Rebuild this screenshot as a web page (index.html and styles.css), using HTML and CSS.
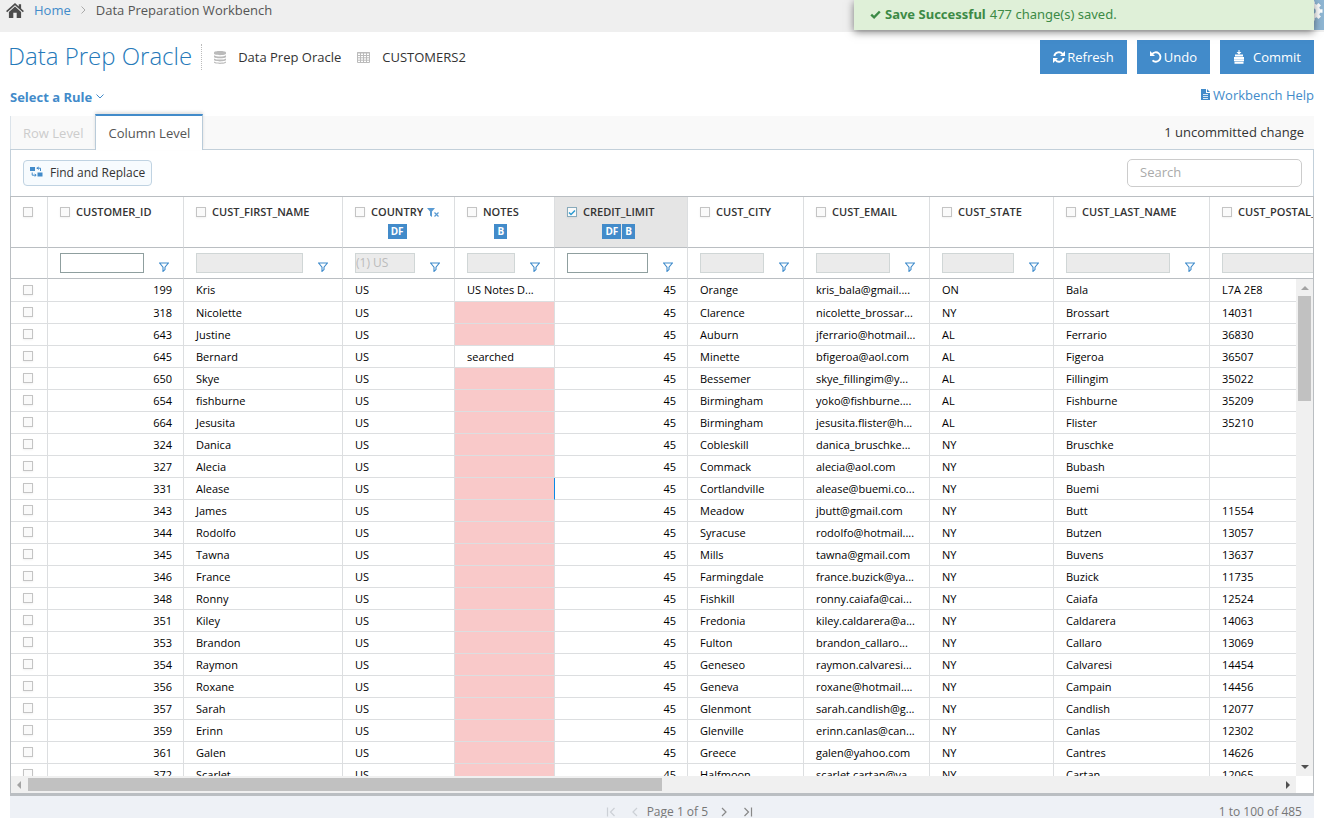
FILE: index.html
```html
<!DOCTYPE html>
<html lang="en">
<head>
    <meta charset="UTF-8">
    <meta name="viewport" content="width=device-width, initial-scale=1.0">
    <title>Data Preparation Workbench</title>
    <link rel="stylesheet" href="styles.css">
</head>
<body>

<!-- Shared icons -->
<svg class="sprite" aria-hidden="true">
    <symbol id="icon-funnel" viewBox="0 0 10 10">
        <path d="M0 1H10M0.6 1L4 5.2V9.4L6 7.6V5.2L9.4 1" fill="none" stroke="#3f8bcb" stroke-width="1.1"/>
    </symbol>
</svg>

<header class="topbar">
    <nav class="breadcrumb" aria-label="Breadcrumb">
        <svg class="home" viewBox="0 0 19 16"><path d="M9.500 0L13.500 3.600V1.200H16V5.800L19 8.600L17.900 9.800L9.500 2.500L1.100 9.800L0 8.600Z"/><path d="M9.500 3.800L16 9.500V16H11.300V10.500H7.700V16H3V9.500Z"/></svg>
        <a href="#">Home</a>
        <svg class="crumb-arrow" viewBox="0 0 5 8"><path d="M0.500 0.500L4 4L0.500 7.500"/></svg>
        <span>Data Preparation Workbench</span>
    </nav>
    <button class="settings" aria-label="Settings">
        <svg viewBox="0 0 20 20"><circle cx="10" cy="10" r="5" fill="none" stroke="#fff" stroke-width="4.500"/><path d="M10 0.500V4M10 16V19.500M0.500 10H4M16 10H19.500M3.300 3.300L6 6M14 14L16.700 16.700M3.300 16.700L6 14M14 6L16.700 3.300" stroke="#fff" stroke-width="3.600"/></svg>
    </button>
</header>

<!-- Save notification -->
<div class="toast" role="status">
    <svg viewBox="0 0 11 9"><path d="M1.200 4.600L4.100 7.300L9.800 1.500" fill="none" stroke="#3c8a46" stroke-width="2.400"/></svg>
    <strong>Save Successful</strong>
    <span>477 change(s) saved.</span>
</div>

<main>
    <div class="title-row">
        <h1>Data Prep Oracle</h1>
        <div class="source">
            <svg class="db" viewBox="0 0 12 13"><path d="M0 1.600C0 -0.400 12 -0.400 12 1.600V2.800C12 4.600 0 4.600 0 2.800ZM0 4.300C2 5.900 10 5.900 12 4.300V6C12 7.700 0 7.700 0 6ZM0 7.400C2 9 10 9 12 7.400V9.100C12 10.800 0 10.800 0 9.100ZM0 10.500C2 12.100 10 12.100 12 10.500V11.600C12 13.400 0 13.400 0 11.600Z"/></svg>
            <span>Data Prep Oracle</span>
            <svg class="tbl" viewBox="0 0 13 11"><path d="M0.500 0.500H12.500V10.500H0.500ZM0 1H13M0.500 3.500H12.500M0.500 5.800H12.500M0.500 8.200H12.500M3.500 1V10.500M6.500 1V10.500M9.500 1V10.500"/></svg>
            <span>CUSTOMERS2</span>
        </div>
        <div class="actions">
            <button class="btn">
                <svg viewBox="0 0 12 12" width="12" height="12"><path d="M1.300 5A4.700 4.700 0 0 1 9.600 3M10.700 7A4.700 4.700 0 0 1 2.400 9" fill="none" stroke="#fff" stroke-width="1.900"/><path d="M12 0V5H7ZM0 12V7H5Z" fill="#fff"/></svg>
                Refresh
            </button>
            <button class="btn">
                <svg viewBox="0 0 12 12" width="12" height="12"><path d="M2 3.200A4.700 4.700 0 1 1 2.500 9.400" fill="none" stroke="#fff" stroke-width="1.900"/><path d="M0 0V5H5Z" fill="#fff"/></svg>
                Undo
            </button>
            <button class="btn commit">
                <svg viewBox="0 0 12 14" width="12" height="14"><path d="M5.500 0H6.500V2H8.500L6 4.500L3.500 2H5.500Z" fill="#fff"/><path d="M2 5.500H10M1 7.900H11M1 10.300H11M1.500 12.700H10.500" stroke="#fff" stroke-width="2"/></svg>
                Commit
            </button>
        </div>
    </div>

    <div class="rule-row">
        <button class="rule-menu">Select a Rule
            <svg viewBox="0 0 8 5" width="8" height="5"><path d="M0.500 0.500L4 4L7.500 0.500"/></svg>
        </button>
        <a class="help" href="#">
            <svg viewBox="0 0 9 11" width="9" height="11"><path d="M0 0H5V4H9V11H0ZM6 0L9 3H6Z" fill="#428bca"/><path d="M2 5.500H7M2 7.500H7M2 9.500H7" stroke="#fff" stroke-width="0.800"/></svg>
            Workbench Help
        </a>
    </div>

    <div class="tabs" role="tablist">
        <button class="tab" role="tab" disabled>Row Level</button>
        <button class="tab active" role="tab" aria-selected="true">Column Level</button>
        <span class="pending">1 uncommitted change</span>
    </div>

    <div class="panel">
        <div class="toolbar">
            <button class="find">
                <svg viewBox="0 0 13 14" width="13" height="14"><path d="M0 1H5V5H0ZM7.500 6.500H12.500V10.500H7.500Z" fill="#428bca"/><path d="M6.500 2.200H10.500V5M8.800 1L7 2.200L8.800 3.400M2.200 6.500V9.200H6M4.700 8L6.200 9.200L4.700 10.400" fill="none" stroke="#428bca"/></svg>
                Find and Replace
            </button>
            <input class="search" type="search" placeholder="Search" aria-label="Search">
        </div>

        <div class="grid">
            <div class="grid-head">
                <table class="grid-table">
                    <colgroup class="cols"></colgroup>
                    <thead id="grid-head"></thead>
                </table>
            </div>
            <div class="grid-body">
                <div class="rows">
                    <table class="grid-table">
                        <colgroup class="cols"></colgroup>
                        <tbody id="grid-rows"></tbody>
                    </table>
                </div>
                <div class="scroll-y">
                    <span class="arrow up"></span>
                    <span class="thumb"></span>
                    <span class="arrow down"></span>
                </div>
            </div>
            <div class="scroll-x">
                <div class="track">
                    <span class="arrow left"></span>
                    <span class="thumb"></span>
                    <span class="arrow right"></span>
                </div>
            </div>
        </div>
    </div>

    <footer class="pager">
        <div class="pages">
            <button disabled aria-label="First page"><svg viewBox="0 0 10 10" width="10" height="10"><path d="M1.500 0.500V9.500M8.500 1L4.500 5L8.500 9"/></svg></button>
            <button disabled aria-label="Previous page"><svg viewBox="0 0 10 10" width="10" height="10"><path d="M7 1L3 5L7 9"/></svg></button>
            <span>Page 1 of 5</span>
            <button aria-label="Next page"><svg viewBox="0 0 10 10" width="10" height="10"><path d="M3 1L7 5L3 9"/></svg></button>
            <button aria-label="Last page"><svg viewBox="0 0 10 10" width="10" height="10"><path d="M1.500 1L5.500 5L1.500 9M8.500 0.500V9.500"/></svg></button>
        </div>
        <span class="count">1 to 100 of 485</span>
    </footer>
</main>

<script src="script.js"></script>
</body>
</html>
```

FILE: styles.css
```css
* {
    box-sizing: border-box;
}

body {
    margin: 0;
    overflow: hidden;
    font-family: "Open Sans", "Noto Sans", sans-serif;
    font-size: 13px;
    line-height: 20px;
    color: #333;
    background-color: #fff;
}

button,
input {
    font-family: inherit;
    font-size: inherit;
    line-height: inherit;
}

button {
    padding: 0;
    border: none;
    background: none;
    cursor: pointer;
}

a {
    color: #428bca;
    text-decoration: none;
}

svg {
    flex: none;
}

.sprite {
    position: absolute;
    width: 0;
    height: 0;
}

/* Top bar */
.topbar {
    display: flex;
    justify-content: space-between;
    height: 32px;
    background-color: #efefef;
}

.breadcrumb {
    display: flex;
    align-items: center;
    gap: 10px;
    height: 20px;
    padding-left: 6px;
    color: #555;
}

.home {
    width: 18px;
    height: 15px;
    fill: #4c4c4c;
}

.crumb-arrow {
    width: 5px;
    height: 8px;
    fill: none;
    stroke: #aaa;
}

.settings {
    width: 30px;
    height: 30px;
    padding: 0 1px 8px 0;
    background-color: #8fb6d3;
}

.settings svg {
    display: block;
    width: 20px;
    height: 20px;
    margin-left: auto;
}

.toast {
    display: flex;
    align-items: center;
    gap: 4px;
    position: absolute;
    top: 0;
    right: 10px;
    width: 460px;
    height: 30px;
    padding: 0 16px 2px;
    font-family: "Noto Sans", "Open Sans", sans-serif;
    color: #3c8a46;
    background-color: #dff0d8;
    box-shadow: 0 2px 8px rgba(0, 0, 0, 0.5);
}

.toast svg {
    width: 11px;
    height: 9px;
    margin-top: 1px;
}

/* Title and actions */
.title-row {
    display: flex;
    align-items: center;
    padding: 8px 10px 0 8px;
}

h1 {
    margin: 0;
    padding: 0 9px 3px 0;
    font-size: 24px;
    line-height: 31px;
    font-weight: 300;
    color: #2579b9;
}

.source {
    display: flex;
    align-items: center;
    gap: 12px;
    height: 26px;
    padding-left: 12px;
    border-left: 1px dotted #bbb;
}

.source .db {
    width: 12px;
    height: 13px;
    fill: #bbb;
}

.source .tbl {
    width: 13px;
    height: 11px;
    margin-left: 4px;
    fill: none;
    stroke: #bbb;
}

.actions {
    display: flex;
    gap: 10px;
    margin-left: auto;
}

.btn {
    display: flex;
    align-items: center;
    gap: 2px;
    height: 34px;
    padding: 0 13px;
    color: #fff;
    background-color: #428bca;
}

.commit {
    gap: 8px;
}

/* Rule selector */
.rule-row {
    display: flex;
    align-items: center;
    justify-content: space-between;
    height: 41px;
    padding: 0 10px;
}

.rule-menu {
    display: flex;
    align-items: center;
    gap: 4px;
    padding-top: 4px;
    font-weight: 700;
    color: #428bca;
}

.rule-menu svg {
    fill: none;
    stroke: #428bca;
}

.help {
    display: flex;
    align-items: center;
    gap: 3px;
}

/* Tabs */
.tabs {
    display: flex;
    align-items: flex-end;
    height: 35px;
    margin: 0 10px;
    background: linear-gradient(#fff 1px, #f9f9f9 1px);
    border-bottom: 1px solid #c3d0da;
}

.tab {
    height: 33px;
    padding: 0 12px;
    border-left: 1px solid #dbe3ea;
    color: #ccc;
}

.tab.active {
    height: 36px;
    margin-bottom: -1px;
    border-top: 2px solid #428bca;
    border-left: 1px solid #b9cbd9;
    border-right: 1px solid #b9cbd9;
    color: #555;
    background-color: #fff;
    box-shadow: 0 -2px 3px rgba(0, 0, 0, 0.12);
}

.pending {
    margin-left: auto;
    padding: 0 10px;
    line-height: 34px;
}

/* Panel */
.panel {
    margin: 0 10px;
}

.toolbar {
    display: flex;
    align-items: center;
    justify-content: space-between;
    height: 46px;
    padding: 0 11px 0 12px;
    border: solid #c3d0da;
    border-width: 0 1px;
}

.find {
    display: flex;
    align-items: center;
    gap: 7px;
    height: 26px;
    padding: 0 6px;
    border: 1px solid #c0d3e2;
    border-radius: 4px;
    font-size: 12px;
    color: #333;
    background-color: #f7fbfe;
}

.search {
    width: 175px;
    height: 28px;
    padding: 0 12px 2px;
    border: 1px solid #ccc;
    border-radius: 5px;
    outline: none;
}

.search::placeholder {
    color: #aaa;
}

/* Data grid */
.grid {
    border: solid #babec2;
    border-width: 1px 1px 3px;
}

.grid-head {
    overflow: hidden;
}

.grid-table {
    width: 1356px;
    table-layout: fixed;
    border-collapse: separate;
    border-spacing: 0;
}

.grid-table th,
.grid-table td {
    padding: 0 11px 0 12px;
    border-right: 1px solid #dcdee0;
    border-bottom: 1px solid #dcdee0;
    overflow: hidden;
    text-align: left;
    white-space: nowrap;
}

.grid-table th {
    height: 51px;
    padding-top: 5px;
    border-bottom-color: #babec2;
    font-size: 11px;
    line-height: 20px;
    font-weight: 700;
    vertical-align: top;
}

.grid-table th.selected {
    background-color: #e5e5e5;
}

.head-cell {
    display: flex;
    align-items: flex-start;
    gap: 6px;
    font-weight: 600;
}

.head-cell .check {
    margin: 5px 0;
}

.badges {
    display: flex;
    justify-content: center;
    gap: 1px;
    margin-top: 2px;
}

.badge {
    padding: 0 3px;
    font-size: 10px;
    line-height: 15px;
    font-weight: 700;
    color: #fff;
    background-color: #428bca;
}

.filtered {
    width: 12px;
    height: 9px;
    margin: 6px 0 0 -2px;
}

.check {
    display: block;
    appearance: none;
    width: 10px;
    height: 10px;
    margin: 0;
    border: 1px solid #c4c4c4;
    background-color: #fafafa;
    box-shadow: 0 1px 2px rgba(0, 0, 0, 0.06);
}

.check:checked {
    border-color: #8ab;
}

.check-wrap {
    position: relative;
}

.check-wrap svg {
    position: absolute;
    top: 7px;
    left: 1px;
    width: 8px;
    height: 7px;
    pointer-events: none;
}

.grid-table .filters td {
    height: 31px;
    padding-right: 14px;
    border-bottom-color: #babec2;
}

.filter {
    display: flex;
    align-items: flex-end;
    gap: 15px;
}

.filter input {
    flex: 1;
    min-width: 0;
    height: 20px;
    padding: 0;
    border: 1px solid #8f9f9f;
    font-size: 12px;
    background-color: #fff;
}

.filter input:disabled {
    border-color: #d0d6d6;
    background-color: #ebebeb;
}

.filter input::placeholder {
    color: #bbb;
}

.filter svg {
    width: 10px;
    height: 10px;
    margin-bottom: 1px;
}

.grid-body {
    display: flex;
    height: calc(100vh - 321px);
}

.rows {
    flex: 1;
    min-width: 0;
    overflow: hidden;
}

.rows .grid-table td {
    height: 22px;
    font-size: 11px;
    line-height: 21px;
    color: #000;
}

.rows .grid-table td.pick,
.rows .grid-table tr:first-child td {
    padding-bottom: 1px;
}

.rows .grid-table tr:first-child td {
    height: 23px;
}

.grid-table td.num {
    text-align: right;
}

.rows td.empty {
    background-color: #f9c9c9;
}

.rows .grid-table td.focused {
    border-right-color: #0a8ae6;
}

/* Scroll bars */
.scroll-y {
    display: flex;
    flex-direction: column;
    align-items: center;
    width: 17px;
    background-color: #f0f0f0;
}

.scroll-y .thumb {
    width: 13px;
    height: 105px;
    background-color: #c1c1c1;
}

.scroll-x {
    height: 17px;
    padding-right: 17px;
}

.track {
    display: flex;
    align-items: center;
    height: 17px;
    background-color: #f0f0f0;
}

.scroll-x .thumb {
    width: calc(50% - 9px);
    height: 13px;
    background-color: #c1c1c1;
}

.arrow {
    flex: none;
    width: 8px;
    height: 8px;
    border: 4px solid transparent;
}

.arrow.up {
    margin: 3px 0 6px;
    border-bottom-color: #a3a3a3;
}

.arrow.down {
    margin: auto 0 3px;
    border-top-color: #505050;
}

.arrow.left {
    margin: 0 7px 0 2px;
    border-right-color: #a3a3a3;
}

.arrow.right {
    margin: 0 2px 0 auto;
    border-left-color: #505050;
}

/* Pager */
.pager {
    display: flex;
    align-items: center;
    height: 31px;
    margin: 0 10px;
    padding: 0 12px;
    font-size: 12px;
    color: #777;
    background-color: #eef1f6;
}

.pages {
    display: flex;
    align-items: center;
    margin: 0 auto;
    padding-left: 118px;
}

.pages button {
    display: flex;
    justify-content: center;
    width: 24px;
}

.pages span {
    margin-right: 4px;
}

.pages svg {
    fill: none;
    stroke: #888;
    stroke-width: 1.2;
}

.pages button:disabled svg {
    stroke: #ccd0d6;
}
```

FILE: script.js
```js
const columns = [
    { name: 'CUSTOMER_ID', width: 136, open: true },
    { name: 'CUST_FIRST_NAME', width: 159 },
    { name: 'COUNTRY', width: 112, badges: ['DF'], filter: '(1) US' },
    { name: 'NOTES', width: 100, badges: ['B'] },
    { name: 'CREDIT_LIMIT', width: 133, badges: ['DF', 'B'], open: true, selected: true },
    { name: 'CUST_CITY', width: 116 },
    { name: 'CUST_EMAIL', width: 126 },
    { name: 'CUST_STATE', width: 124 },
    { name: 'CUST_LAST_NAME', width: 156 },
    { name: 'CUST_POSTAL_CODE', width: 157 }
];

// id, first name, notes, city, email, state, last name, postal code
const customers = [
    [199, 'Kris', 'US Notes D...', 'Orange', 'kris_bala@gmail....', 'ON', 'Bala', 'L7A 2E8'],
    [318, 'Nicolette', '', 'Clarence', 'nicolette_brossar...', 'NY', 'Brossart', '14031'],
    [643, 'Justine', '', 'Auburn', 'jferrario@hotmail...', 'AL', 'Ferrario', '36830'],
    [645, 'Bernard', 'searched', 'Minette', 'bfigeroa@aol.com', 'AL', 'Figeroa', '36507'],
    [650, 'Skye', '', 'Bessemer', 'skye_fillingim@y...', 'AL', 'Fillingim', '35022'],
    [654, 'fishburne', '', 'Birmingham', 'yoko@fishburne....', 'AL', 'Fishburne', '35209'],
    [664, 'Jesusita', '', 'Birmingham', 'jesusita.flister@h...', 'AL', 'Flister', '35210'],
    [324, 'Danica', '', 'Cobleskill', 'danica_bruschke...', 'NY', 'Bruschke', ''],
    [327, 'Alecia', '', 'Commack', 'alecia@aol.com', 'NY', 'Bubash', ''],
    [331, 'Alease', '', 'Cortlandville', 'alease@buemi.co...', 'NY', 'Buemi', ''],
    [343, 'James', '', 'Meadow', 'jbutt@gmail.com', 'NY', 'Butt', '11554'],
    [344, 'Rodolfo', '', 'Syracuse', 'rodolfo@hotmail....', 'NY', 'Butzen', '13057'],
    [345, 'Tawna', '', 'Mills', 'tawna@gmail.com', 'NY', 'Buvens', '13637'],
    [346, 'France', '', 'Farmingdale', 'france.buzick@ya...', 'NY', 'Buzick', '11735'],
    [348, 'Ronny', '', 'Fishkill', 'ronny.caiafa@cai...', 'NY', 'Caiafa', '12524'],
    [351, 'Kiley', '', 'Fredonia', 'kiley.caldarera@a...', 'NY', 'Caldarera', '14063'],
    [353, 'Brandon', '', 'Fulton', 'brandon_callaro...', 'NY', 'Callaro', '13069'],
    [354, 'Raymon', '', 'Geneseo', 'raymon.calvaresi...', 'NY', 'Calvaresi', '14454'],
    [356, 'Roxane', '', 'Geneva', 'roxane@hotmail....', 'NY', 'Campain', '14456'],
    [357, 'Sarah', '', 'Glenmont', 'sarah.candlish@g...', 'NY', 'Candlish', '12077'],
    [359, 'Erinn', '', 'Glenville', 'erinn.canlas@can...', 'NY', 'Canlas', '12302'],
    [361, 'Galen', '', 'Greece', 'galen@yahoo.com', 'NY', 'Cantres', '14626'],
    [372, 'Scarlet', '', 'Halfmoon', 'scarlet.cartan@ya...', 'NY', 'Cartan', '12065']
];

const focusedRow = 331;

// Column widths, shared by the header table and the rows table
document.querySelectorAll('.cols').forEach(group => {
    group.innerHTML = [37, ...columns.map(c => c.width)]
        .map(w => `<col style="width: ${w}px">`).join('');
});

const tick = '<svg viewBox="0 0 8 7"><path d="M1 3.500L3 5.500L7 1.500" fill="none" stroke="#2b9ad0" stroke-width="1.500"/></svg>';
const filteredIcon = '<svg class="filtered" viewBox="0 0 12 9"><path d="M0 0H8L5 3.500V9L3 7.500V3.500Z" fill="#5a9bd3"/><path d="M7.500 4.500L11.500 8.500M11.500 4.500L7.500 8.500" stroke="#5a9bd3" stroke-width="1.200"/></svg>';

function headCell(col) {
    const badges = (col.badges || []).map(b => `<span class="badge">${b}</span>`).join('');
    return `<th class="${col.selected ? 'selected' : ''}" scope="col">
        <div class="head-cell">
            <span class="check-wrap"><input class="check" type="checkbox" id="col-${col.name}" ${col.selected ? 'checked' : ''}>${col.selected ? tick : ''}</span>
            <div><label for="col-${col.name}">${col.name}</label>${badges ? `<div class="badges">${badges}</div>` : ''}</div>
            ${col.filter ? filteredIcon : ''}
        </div></th>`;
}

function filterCell(col) {
    return `<td><div class="filter">
        <input type="text" aria-label="Filter ${col.name}" placeholder="${col.filter || ''}" ${col.open ? '' : 'disabled'}>
        <svg><use href="#icon-funnel"/></svg>
    </div></td>`;
}

document.getElementById('grid-head').innerHTML = `
    <tr><th><div class="head-cell"><input class="check" type="checkbox" aria-label="Select all"></div></th>${columns.map(headCell).join('')}</tr>
    <tr class="filters"><td></td>${columns.map(filterCell).join('')}</tr>`;

document.getElementById('grid-rows').innerHTML = customers.map(([id, first, notes, city, email, state, last, postal]) => {
    const noteClass = (notes ? '' : 'empty') + (id === focusedRow ? ' focused' : '');
    return `<tr>
        <td class="pick"><input class="check" type="checkbox" aria-label="Select ${id}"></td>
        <td class="num">${id}</td><td>${first}</td><td>US</td>
        <td class="${noteClass}">${notes}</td><td class="num">45</td>
        <td>${city}</td><td>${email}</td><td>${state}</td><td>${last}</td><td>${postal}</td>
    </tr>`;
}).join('');
```
